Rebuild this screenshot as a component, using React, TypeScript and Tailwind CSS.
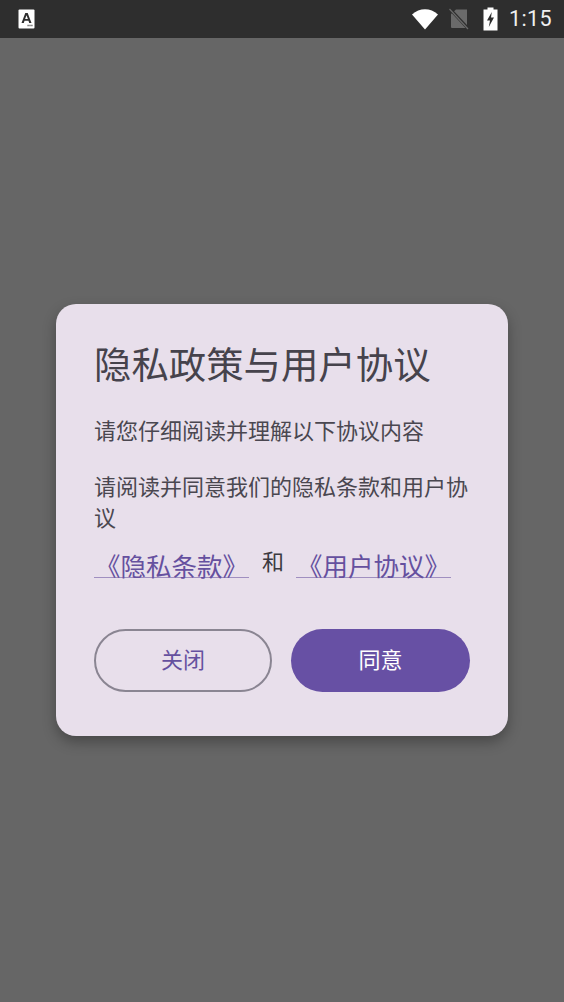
export default function App() {
  const font = { fontFamily: '"Roboto", "Noto Sans CJK SC", sans-serif' };
  return (
    <div style={font} className="w-[564px] h-[1002px] flex flex-col bg-[#666666] overflow-hidden">
      <div className="h-[38px] shrink-0 bg-[#2e2e2e] flex items-center pl-[18px] pr-[12px]">
        <svg width="17" height="20" viewBox="0 0 17 20">
          <rect x="0.5" y="0.5" width="16" height="19" rx="1" fill="#fff" />
          <path d="M3.5 14 L7.3 4 L9.7 4 L13.5 14 L11.2 14 L10.5 11.8 L6.5 11.8 L5.8 14 Z M7.1 10 L9.9 10 L8.5 6.3 Z" fill="#2e2e2e" fillRule="evenodd" />
          <path d="M9.5 16.5 H15" stroke="#555" strokeWidth="1.6" strokeDasharray="1.2 0.7" />
        </svg>
        <div className="flex-1" />
        <svg width="28" height="22" viewBox="0 0 28 22" className="mr-[10px]">
          <path d="M1 6.5 C8.5 -0.5 19.5 -0.5 27 6.5 L14 21.5 Z" fill="#fff" />
        </svg>
        <svg width="20" height="22" viewBox="0 0 20 22" className="mr-[14px]">
          <path d="M7 1.5 L18 1.5 L18 19 Q18 20 17 20 L3 20 Q2 20 2 19 L2 6 Z" fill="#6a6a6a" />
          <path d="M0.5 0.5 L19.5 21" stroke="#2e2e2e" strokeWidth="3" />
          <path d="M0.5 1 L19 21" stroke="#6a6a6a" strokeWidth="1.2" />
        </svg>
        <svg width="15" height="24" viewBox="0 0 15 24" className="mr-[11px]">
          <path d="M4.5 0.5 H10.5 V2.5 H14.5 V23.5 H0.5 V2.5 H4.5 Z" fill="#fff" />
          <path d="M8.8 5 L4 13.5 H7 L5.8 20 L11 10.5 H8 Z" fill="#2e2e2e" />
        </svg>
        <span className="text-[21.5px] leading-none text-[#f0f0f0] tracking-[0.4px]">1:15</span>
      </div>
      <div className="flex-1 flex justify-center items-start pt-[266px]">
        <div className="w-[452px] h-[432px] bg-[#e8dfeb] rounded-[20px] shadow-[0_6px_14px_rgba(0,0,0,0.3)] pl-[38px] pr-[38px] pt-[39px] flex flex-col">
          <h1 className="text-[37.4px] leading-[46px] text-[#46434c] font-normal whitespace-nowrap">隐私政策与用户协议</h1>
          <p className="mt-[27px] text-[22px] leading-[32px] text-[#4a4750] whitespace-nowrap">请您仔细阅读并理解以下协议内容</p>
          <p className="mt-[24px] text-[22px] leading-[31px] text-[#4a4750]">请阅读并同意我们的隐私条款和用户协议</p>
          <div className="mt-[17px] flex items-start">
            <span className="w-[155px] h-[27px] border-b border-[#a08fc0] text-[25.5px] leading-[33px] text-[#65509f] whitespace-nowrap text-center">《隐私条款》</span>
            <span className="ml-[13px] text-[22px] leading-[24px] text-[#3b3940]">和</span>
            <span className="ml-[12px] w-[155px] h-[27px] border-b border-[#a08fc0] text-[25.5px] leading-[33px] text-[#65509f] whitespace-nowrap text-center">《用户协议》</span>
          </div>
          <div className="mt-[51px] flex gap-[19px]">
            <button className="w-[178px] h-[63px] rounded-full border-2 border-[#8a8592] text-[22px] text-[#65509f]">关闭</button>
            <button className="w-[179px] h-[63px] rounded-full bg-[#6750a4] text-[22px] text-white">同意</button>
          </div>
        </div>
      </div>
    </div>
  );
}
